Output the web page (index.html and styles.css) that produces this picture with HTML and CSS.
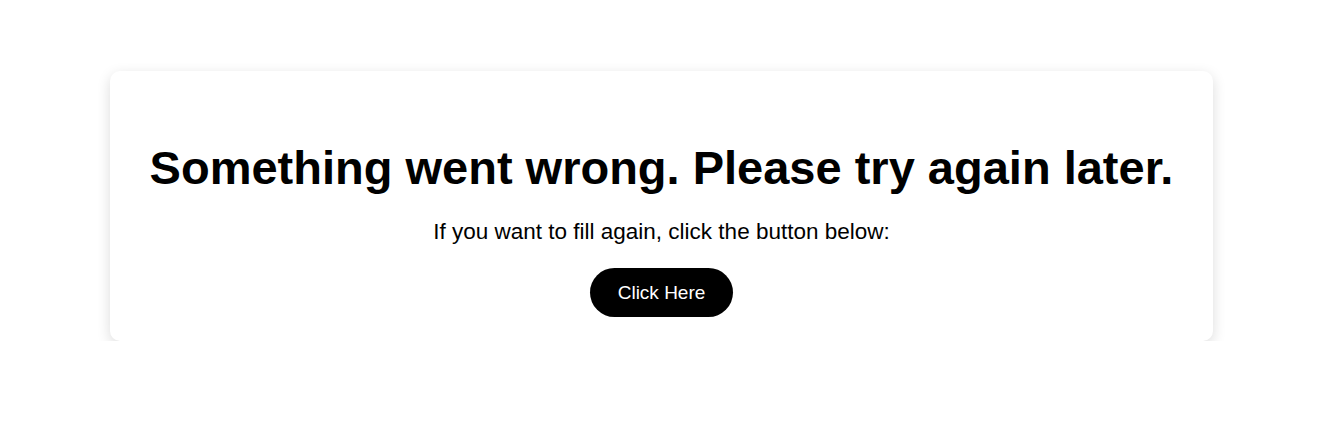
FILE: index.html
```html
<!DOCTYPE html>
<html>
<head>
<meta charset="utf-8">
<link rel="stylesheet" href="styles.css">
</head>
<body>
<div class="card">
  <h1 class="title">Something went wrong. Please try again later.</h1>
  <p class="text">If you want to fill again, click the button below:</p>
  <button class="btn">Click Here</button>
</div>
</body>
</html>
```
FILE: styles.css
```css
html, body {
  margin: 0;
  padding: 0;
  background: #ffffff;
}
body {
  font-family: "Liberation Sans", Arial, sans-serif;
  color: #000;
}
.card {
  box-sizing: border-box;
  width: 1103px;
  height: 270px;
  margin: 71px 0 0 110px;
  background: #fff;
  border-radius: 10px;
  box-shadow: 0 4px 14px rgba(0, 0, 0, 0.14);
  display: flex;
  flex-direction: column;
  align-items: center;
  padding-top: 69px;
}
.title {
  margin: 0;
  font-size: 47px;
  font-weight: bold;
  line-height: 1.2;
  white-space: nowrap;
}
.text {
  margin: 22px 0 0;
  font-size: 22.5px;
  line-height: 1.2;
}
.btn {
  margin-top: 23px;
  width: 143px;
  height: 49px;
  border: none;
  border-radius: 25px;
  background: #000;
  color: #fff;
  font-family: "Liberation Sans", Arial, sans-serif;
  font-size: 19px;
  padding: 0;
}
```
